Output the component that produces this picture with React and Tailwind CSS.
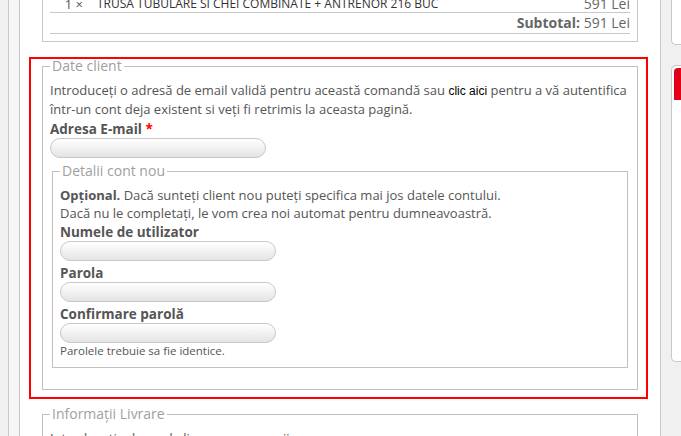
import React from 'react';

const Field = ({ label, required, className = '' }) => (
  <>
    <div className={`text-[13.5px] leading-[16px] font-bold text-[#555] ${className}`}>
      {label}
      {required && <span className="text-[#ff0000]"> *</span>}
    </div>
    <div className="mt-[1px] h-[20px] w-[216px] rounded-full border border-[#c8c8c8] bg-linear-to-b from-white to-[#e4e4e4]" />
  </>
);

const App = () => {
  return (
    <div className="flex h-[436px] w-[681px] overflow-hidden bg-[#f0f0f0] font-['Open_Sans',sans-serif] text-[#555]">
      {/* Left rails */}
      <div className="w-[8px] shrink-0" />
      <div className="w-[12px] shrink-0 border-x border-[#c8c8c8] bg-[#f6f6f6]" />

      {/* Main column */}
      <main className="w-[641px] shrink-0 border-r border-[#c8c8c8] bg-white px-[22px]">
        {/* Cart box */}
        <div className="-mt-[14px] border border-[#c8c8c8] px-[7px] pt-[5px] pb-[7px]">
          <div className="flex h-[21px] items-end border-b border-[#c8c8c8] text-[12px] leading-[16px]">
            <span className="w-[33px] text-right text-[13px] text-[#555]">1 ×</span>
            <span className="pl-[14px] uppercase text-[#333]">Trusa tubulare si chei combinate + antrenor 216 buc</span>
            <span className="ml-auto text-[14px] text-[#666]">591 Lei</span>
          </div>
          <div className="flex h-[21px] items-center justify-end border-b border-[#c8c8c8] text-[14px] leading-[20px] text-[#666]">
            <b>Subtotal:</b>&nbsp;591 Lei
          </div>
        </div>

        {/* Highlighted client block */}
        <div className="mt-[15px] -ml-[13px] -mr-[10px] border-2 border-[#ff0000] pl-[11px] pr-[8px] pb-[7px]">
          <fieldset className="border border-[#c0c0c0] px-[7px] pt-[8px] pb-[21px]">
            <legend className="px-[2px] text-[14px] leading-[14px] text-[#a0a0a0]">Date client</legend>
            <p className="text-[13px] leading-[18px]">
              Introduceți o adresă de email validă pentru această comandă sau{' '}
              <a className="font-['Liberation_Sans',sans-serif] text-[12px] text-black">clic aici</a> pentru a vă autentifica
              într-un cont deja existent si veți fi retrimis la aceasta pagină.
            </p>
            <Field label="Adresa E-mail" required className="mt-[3px]" />

            <fieldset className="mx-[2px] mt-[6px] border border-[#c0c0c0] px-[7px] pt-[8px] pb-[8px]">
              <legend className="px-[2px] text-[14px] leading-[14px] text-[#a0a0a0]">Detalii cont nou</legend>
              <p className="text-[13px] leading-[18px]">
                <b>Opțional.</b> Dacă sunteți client nou puteți specifica mai jos datele contului.
                <br />
                Dacă nu le completați, le vom crea noi automat pentru dumneavoastră.
              </p>
              <Field label="Numele de utilizator" className="mt-[2px]" />
              <Field label="Parola" className="mt-[4px]" />
              <Field label="Confirmare parolă" className="mt-[4px]" />
              <div className="text-[11.5px] leading-[16px]">Parolele trebuie sa fie identice.</div>
            </fieldset>
          </fieldset>
        </div>

        {/* Delivery */}
        <fieldset className="mt-[8px] border border-[#c0c0c0] px-[7px] pt-[8px]">
          <legend className="px-[2px] text-[14px] leading-[14px] text-[#a0a0a0]">Informații Livrare</legend>
          <p className="text-[13px] leading-[18px]">Introduceți adresa de livrare a comenzii.</p>
        </fieldset>
      </main>

      {/* Right sidebar */}
      <aside className="flex-1 pl-[10px]">
        <div className="h-[45px] rounded-bl-[5px] border-b border-l border-[#c8c8c8] bg-white" />
        <div className="mt-[20px] h-[297px] rounded-l-[5px] border-y border-l border-[#c8c8c8] bg-white pt-[2px] pl-[2px]">
          <div className="h-[32px] rounded-tl-[4px] bg-[#e2001a]" />
        </div>
      </aside>
    </div>
  );
};

export default App;
